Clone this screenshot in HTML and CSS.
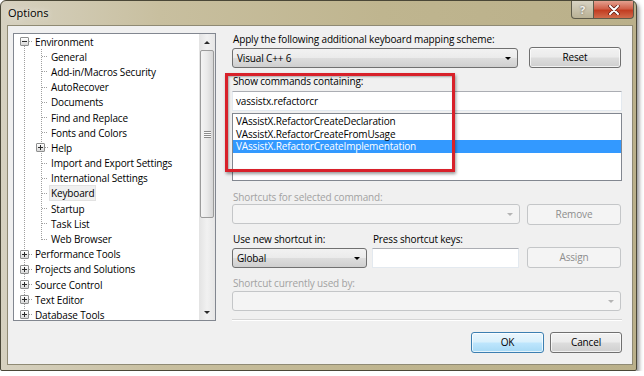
FILE: index.html
```html
<!DOCTYPE html>
<html lang="en">
<head>
  <meta charset="UTF-8" />
  <title>Options</title>
  <link rel="stylesheet" href="styles.css">
</head>
<body>
  <!-- Dialog window -->
  <div class="window">
    <!-- Title bar -->
    <div class="titlebar">
      <span class="title">Options</span>
      <div class="caption-buttons">
        <span class="cap-btn help">?</span>
        <span class="cap-btn close">
          <svg width="12" height="10" viewBox="0 0 12 10">
            <path d="M2 1 L10 9 M10 1 L2 9" stroke="#5a1a12" stroke-width="3.4" stroke-linecap="round"/>
            <path d="M2 1 L10 9 M10 1 L2 9" stroke="#ffffff" stroke-width="2" stroke-linecap="round"/>
          </svg>
        </span>
      </div>
    </div>

    <!-- Client area -->
    <div class="client">
      <!-- Category tree -->
      <div class="tree">
        <div class="tree-list">
          <div class="node root"><span class="expander minus"></span><span class="dash"></span><span class="text">Environment</span></div>
          <div class="children">
            <div class="node child"><span class="dash"></span><span class="text">General</span></div>
            <div class="node child"><span class="dash"></span><span class="text">Add-in/Macros Security</span></div>
            <div class="node child"><span class="dash"></span><span class="text">AutoRecover</span></div>
            <div class="node child"><span class="dash"></span><span class="text">Documents</span></div>
            <div class="node child"><span class="dash"></span><span class="text">Find and Replace</span></div>
            <div class="node child"><span class="dash"></span><span class="text">Fonts and Colors</span></div>
            <div class="node child has-kids"><span class="expander plus"></span><span class="dash short"></span><span class="text">Help</span></div>
            <div class="node child"><span class="dash"></span><span class="text">Import and Export Settings</span></div>
            <div class="node child"><span class="dash"></span><span class="text">International Settings</span></div>
            <div class="node child"><span class="dash"></span><span class="text selected">Keyboard</span></div>
            <div class="node child"><span class="dash"></span><span class="text">Startup</span></div>
            <div class="node child"><span class="dash"></span><span class="text">Task List</span></div>
            <div class="node child"><span class="dash"></span><span class="text">Web Browser</span></div>
          </div>
          <div class="node root"><span class="expander plus"></span><span class="dash"></span><span class="text">Performance Tools</span></div>
          <div class="node root"><span class="expander plus"></span><span class="dash"></span><span class="text">Projects and Solutions</span></div>
          <div class="node root"><span class="expander plus"></span><span class="dash"></span><span class="text">Source Control</span></div>
          <div class="node root"><span class="expander plus"></span><span class="dash"></span><span class="text">Text Editor</span></div>
          <div class="node root"><span class="expander plus"></span><span class="dash"></span><span class="text">Database Tools</span></div>
        </div>
        <!-- Vertical scrollbar -->
        <div class="scrollbar">
          <div class="sb-arrow"><span class="tri up"></span></div>
          <div class="sb-thumb"><span class="grip"></span></div>
          <div class="sb-track"></div>
          <div class="sb-arrow"><span class="tri down"></span></div>
        </div>
      </div>

      <!-- Keyboard page -->
      <div class="pane">
        <div class="label">Apply the following additional keyboard mapping scheme:</div>
        <div class="row row-scheme">
          <div class="combo scheme"><span class="value">Visual C++ 6</span><span class="arrow"></span></div>
          <div class="button reset">Reset</div>
        </div>

        <div class="label label-show">Show commands containing:</div>
        <div class="textbox filter">vassistx.refactorcr</div>
        <div class="listbox">
          <div class="item">VAssistX.RefactorCreateDeclaration</div>
          <div class="item">VAssistX.RefactorCreateFromUsage</div>
          <div class="item selected">VAssistX.RefactorCreateImplementation</div>
        </div>

        <div class="label disabled label-shortcuts">Shortcuts for selected command:</div>
        <div class="row row-shortcuts">
          <div class="combo disabled shortcuts"><span class="value"></span><span class="arrow"></span></div>
          <div class="button disabled side">Remove</div>
        </div>

        <div class="row row-labels">
          <div class="label scope-label">Use new shortcut in:</div>
          <div class="label">Press shortcut keys:</div>
        </div>
        <div class="row row-assign">
          <div class="combo scope"><span class="value">Global</span><span class="arrow"></span></div>
          <div class="textbox keys"></div>
          <div class="button disabled side">Assign</div>
        </div>

        <div class="label disabled label-used">Shortcut currently used by:</div>
        <div class="combo disabled used"><span class="value"></span><span class="arrow"></span></div>

        <div class="separator"></div>

        <div class="row row-actions">
          <div class="button default ok">OK</div>
          <div class="button cancel">Cancel</div>
        </div>

        <!-- Red annotation box drawn over the screenshot -->
        <div class="highlight"></div>
      </div>
    </div>
  </div>
</body>
</html>
```

FILE: styles.css
```css
/* Colours and fonts of the classic dialog */
:root {
  --frame-gradient: linear-gradient(90deg, #d6d1c0 0, #c8bf9f 25%, #bfb58f 60%, #bab08a 100%);
  --face: #f0f0f0;
  --btn-border: #707070;
  --btn-gradient: linear-gradient(#f2f2f2 0, #ebebeb 48%, #dddddd 52%, #cfcfcf 100%);
  --box-border: #abadb3;
  --list-border: #828790;
  --disabled-text: #a2a2a2;
  --disabled-border: #c4c6c8;
  --disabled-bg: #f4f4f4;
  --select: #3399ff;
  --tree-line: #a0a0a0;
  --ui-font: "Open Sans", "Noto Sans", sans-serif;
}

body {
  margin: 0;
  background: #ffffff;
  font-family: var(--ui-font);
  font-size: 10px;
  letter-spacing: -0.15px;
  color: #000;
}

/* Window frame */
.window {
  width: 637px;
  height: 371px;
  box-sizing: border-box;
  border: 1px solid #4a4737;
  border-radius: 6px 6px 2px 2px;
  background: var(--frame-gradient);
  box-shadow: 2px 3px 4px rgba(0, 0, 0, 0.45);
  display: flex;
  flex-direction: column;
}

.titlebar {
  height: 24px;
  display: flex;
  align-items: flex-start;
  padding-left: 7px;
}

.title {
  line-height: 24px;
  font-size: 11px;
  letter-spacing: 0;
  text-shadow: 0 0 6px rgba(255, 255, 255, 0.9);
}

.caption-buttons {
  margin-left: auto;
  margin-right: 2px;
  display: flex;
}

.cap-btn {
  height: 18px;
  box-sizing: border-box;
  display: flex;
  align-items: center;
  justify-content: center;
  border: 1px solid #5d5a4a;
  border-top: none;
}

.help {
  width: 23px;
  border-radius: 0 0 0 4px;
  background: linear-gradient(#d8d3c3, #b9b195);
  color: #f4f2ea;
  font-weight: bold;
  font-size: 11px;
  text-shadow: 0 0 2px #555;
}

.close {
  width: 40px;
  border-left: none;
  border-radius: 0 0 4px 0;
  background: linear-gradient(#e4a08f 0, #d0614a 45%, #c23d22 55%, #d16b4b 100%);
}

/* Client area */
.client {
  flex: 1;
  margin: 0 3px 5px 6px;
  background: var(--face);
  border: 1px solid #8f8a74;
  display: flex;
  padding: 7px 0 0 5px;
  gap: 16px;
}

/* Tree view */
.tree {
  width: 203px;
  height: 288px;
  box-sizing: border-box;
  border: 1px solid var(--list-border);
  background: #fff;
  display: flex;
  overflow: hidden;
}

.tree-list {
  flex: 1;
  background: repeating-linear-gradient(var(--tree-line) 0 1px, transparent 1px 2px) 10px 8px / 1px 100% no-repeat;
}

.node {
  height: 15.2px;
  display: flex;
  align-items: center;
  white-space: nowrap;
}

.root {
  padding-left: 6px;
}

.children {
  margin-left: 27px;
  background: repeating-linear-gradient(var(--tree-line) 0 1px, transparent 1px 2px) 0 0 / 1px calc(100% - 7px) no-repeat;
}

.child {
  padding-left: 1px;
}

.dash {
  width: 3px;
  height: 1px;
  background: repeating-linear-gradient(90deg, var(--tree-line) 0 1px, transparent 1px 2px);
  margin-right: 2px;
}

.child .dash {
  width: 6px;
}

.child .dash.short {
  width: 3px;
}

.expander {
  width: 9px;
  height: 9px;
  box-sizing: border-box;
  border: 1px solid #8e8f8f;
  border-radius: 1px;
  background: linear-gradient(#ffffff, #d8d8d8);
  position: relative;
}

.has-kids .expander {
  margin-left: -6px;
}

.expander::before,
.plus::after {
  content: '';
  position: absolute;
  background: #2b2b2b;
}

.expander::before {
  left: 1px;
  top: 3px;
  width: 5px;
  height: 1px;
}

.plus::after {
  left: 3px;
  top: 1px;
  width: 1px;
  height: 5px;
}

.text {
  padding: 0 1px;
}

.text.selected {
  background: #f0f0f0;
  outline: 1px solid #e2e2e2;
}

/* Scrollbar */
.scrollbar {
  width: 16px;
  display: flex;
  flex-direction: column;
  background: linear-gradient(90deg, #e3e3e3, #f1f1f1 50%, #e6e6e6);
}

.sb-arrow {
  height: 16px;
  display: flex;
  align-items: center;
  justify-content: center;
}

.tri {
  width: 0;
  height: 0;
  border-left: 3px solid transparent;
  border-right: 3px solid transparent;
}

.tri.up {
  border-bottom: 3px solid #2a2a2a;
}

.tri.down {
  border-top: 3px solid #2a2a2a;
}

.sb-thumb {
  height: 168px;
  margin: 0 1px;
  box-sizing: border-box;
  border: 1px solid #9b9b9b;
  border-radius: 2px;
  background: linear-gradient(90deg, #f4f4f4, #e9e9e9 50%, #d6d6d6);
  display: flex;
  align-items: center;
  justify-content: center;
}

.grip {
  width: 7px;
  height: 7px;
  background: repeating-linear-gradient(#8b8b8b 0 1px, #fafafa 1px 2px);
}

.sb-track {
  flex: 1;
}

/* Keyboard page */
.pane {
  width: 390px;
  display: flex;
  flex-direction: column;
  position: relative;
}

.label {
  height: 12px;
  line-height: 12px;
  padding-left: 1px;
  white-space: nowrap;
}

.label.disabled {
  color: var(--disabled-text);
}

.row {
  display: flex;
  align-items: flex-start;
}

.combo {
  height: 20px;
  box-sizing: border-box;
  border: 1px solid var(--btn-border);
  border-radius: 3px;
  background: var(--btn-gradient);
  display: flex;
  align-items: center;
  padding: 0 6px 0 4px;
}

.combo .value {
  flex: 1;
}

.combo .arrow {
  width: 0;
  height: 0;
  border-left: 3px solid transparent;
  border-right: 3px solid transparent;
  border-top: 3px solid #000;
}

.combo.disabled {
  border-color: var(--disabled-border);
  background: var(--disabled-bg);
}

.combo.disabled .arrow {
  border-top-color: #b4b4b4;
}

.button {
  height: 21px;
  box-sizing: border-box;
  border: 1px solid var(--btn-border);
  border-radius: 3px;
  background: var(--btn-gradient);
  box-shadow: inset 0 0 0 1px rgba(255, 255, 255, 0.7);
  text-align: center;
  line-height: 19px;
}

.button.disabled {
  border-color: var(--disabled-border);
  background: var(--disabled-bg);
  color: #8d8d8d;
  box-shadow: none;
}

.button.default {
  border-color: #3c7fb1;
  background: linear-gradient(#eaf6fd 0, #d9f0fc 48%, #bee6fd 52%, #a7d9f5 100%);
}

.textbox {
  height: 20px;
  box-sizing: border-box;
  border: 1px solid #e3e9ef;
  border-top-color: var(--box-border);
  background: #fff;
  padding-left: 3px;
  line-height: 18px;
}

/* Row spacing, top to bottom */
.row-scheme {
  margin-top: 2px;
}

.combo.scheme {
  width: 286px;
  margin-top: 1px;
}

.reset {
  width: 92px;
  margin-left: 11px;
}

.label-show {
  margin-top: 7px;
}

.filter {
  margin-top: 4px;
}

.listbox {
  margin-top: 2px;
  height: 68px;
  box-sizing: border-box;
  border: 1px solid var(--list-border);
  background: #fff;
  padding-top: 1px;
}

.item {
  height: 12.5px;
  line-height: 12.5px;
  padding-left: 3px;
}

.item.selected {
  background: var(--select);
  color: #fff;
}

.label-shortcuts {
  margin-top: 10px;
}

.row-shortcuts {
  margin-top: 1px;
}

.combo.shortcuts {
  width: 288px;
}

.side {
  width: 94px;
  margin-left: 7px;
}

.row-labels {
  margin-top: 8px;
}

.scope-label {
  width: 139px;
}

.row-assign {
  margin-top: 2px;
}

.combo.scope {
  width: 135px;
  margin-top: 1px;
}

.keys {
  width: 147px;
  margin-left: 5px;
  margin-top: 1px;
}

.row-assign .side {
  margin-left: 8px;
}

.label-used {
  margin-top: 9px;
}

.combo.used {
  margin-top: 2px;
  width: 389px;
}

.separator {
  margin-top: 8px;
  height: 0;
  border-top: 1px solid #d5d5d5;
  border-bottom: 1px solid #ffffff;
}

.row-actions {
  margin-top: 11px;
  justify-content: flex-end;
  gap: 6px;
}

.ok {
  width: 73px;
}

.cancel {
  width: 72px;
}

/* Annotation rectangle */
.highlight {
  position: absolute;
  left: -7px;
  top: 40px;
  width: 230px;
  height: 99px;
  box-sizing: border-box;
  border: 3px solid #d8212a;
  box-shadow: 1px 2px 3px rgba(0, 0, 0, 0.4), inset 1px 1px 2px rgba(0, 0, 0, 0.3);
}
```
